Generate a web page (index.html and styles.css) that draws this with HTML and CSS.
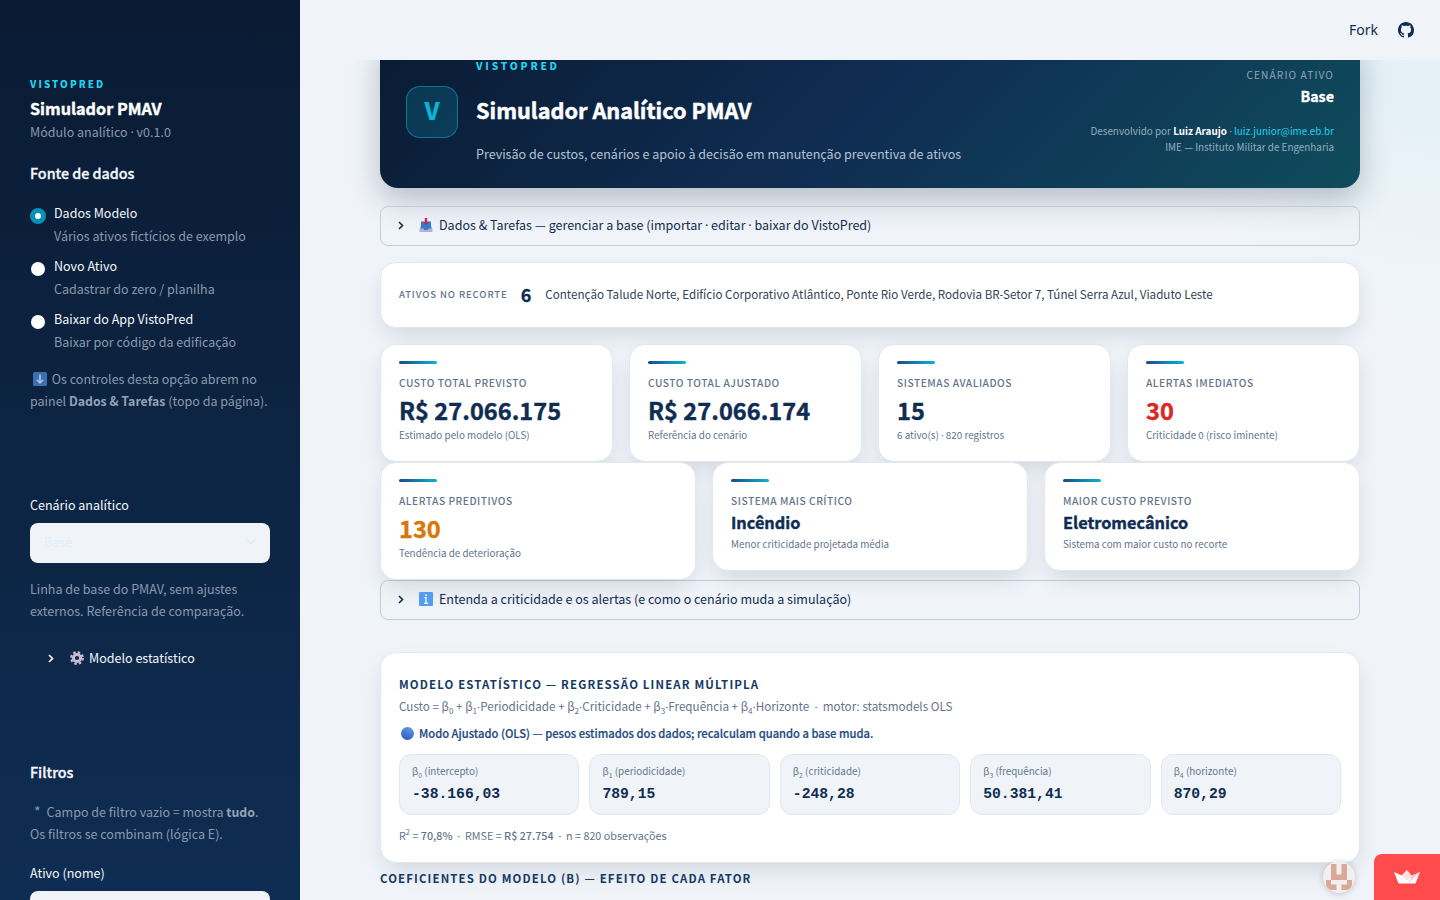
FILE: index.html
```html
<!DOCTYPE html>
<html lang="pt-br">
<head>
    <meta charset="UTF-8">
    <meta name="viewport" content="width=device-width, initial-scale=1.0">
    <title>Simulador Analítico PMAV</title>
    <link rel="stylesheet" href="styles.css">
</head>
<body>
    <div class="app">
        <aside class="sidebar">
            <div class="side-brand">VISTOPRED</div>
            <div class="side-title">Simulador PMAV</div>
            <div class="side-caption">Módulo analítico <i>·</i> v0.1.0</div>

            <h3 class="side-heading">Fonte de dados</h3>
            <div class="radio-group">
                <div class="radio">
                    <span class="dot dot-on"></span>
                    <div><div class="radio-label">Dados Modelo</div><div class="side-caption">Vários ativos fictícios de exemplo</div></div>
                </div>
                <div class="radio">
                    <span class="dot"></span>
                    <div><div class="radio-label">Novo Ativo</div><div class="side-caption">Cadastrar do zero / planilha</div></div>
                </div>
                <div class="radio">
                    <span class="dot"></span>
                    <div><div class="radio-label">Baixar do App VistoPred</div><div class="side-caption">Baixar por código da edificação</div></div>
                </div>
            </div>
            <p class="side-caption side-hint">
                <svg class="icon-down" viewBox="0 0 14 14"><rect width="14" height="14" rx="1.5" fill="#3a70b4"/><path d="M7 2.5v8M4 7.8l3 3 3-3" fill="none" stroke="#a9bdd6" stroke-width="1.8"/></svg>
                Os controles desta opção abrem no<br>painel <b>Dados &amp; Tarefas</b> (topo da página).
            </p>

            <div class="side-label">Cenário analítico</div>
            <div class="select">
                <span>Base</span>
                <svg width="10" height="6" viewBox="0 0 10 6"><path d="M1 1l4 4 4-4" fill="none" stroke="#e3ecf6" stroke-width="1.5"/></svg>
            </div>
            <p class="side-caption side-note">Linha de base do PMAV, sem ajustes<br>externos. Referência de comparação.</p>

            <div class="side-expander">
                <svg class="chevron" viewBox="0 0 6 9"><path d="M1 1l3.5 3.5L1 8" fill="none" stroke="#ffffff" stroke-width="1.7"/></svg>
                <svg class="icon-gear" viewBox="0 0 14 14"><circle cx="7" cy="7" r="5.8" fill="none" stroke="#cbbfd6" stroke-width="2.2" stroke-dasharray="2.5 2.055"/><circle cx="7" cy="7" r="3.6" fill="none" stroke="#c6b9d3" stroke-width="3"/></svg>
                <span>Modelo estatístico</span>
            </div>

            <h3 class="side-heading side-filters">Filtros</h3>
            <p class="side-caption side-help"><span class="star">*</span>Campo de filtro vazio = mostra <b>tudo</b>.<br>Os filtros se combinam (lógica E).</p>
            <div class="side-label side-last">Ativo (nome)</div>
            <div class="select"></div>
        </aside>

        <div class="page">
            <header class="topbar">
                <span class="fork">Fork</span>
                <svg width="16" height="16" viewBox="0 0 16 16"><path fill="#0f2d52" d="M8 0C3.58 0 0 3.58 0 8c0 3.54 2.29 6.53 5.47 7.59.4.07.55-.17.55-.38 0-.19-.01-.82-.01-1.49-2.01.37-2.53-.49-2.69-.94-.09-.23-.48-.94-.82-1.13-.28-.15-.68-.52-.01-.53.63-.01 1.08.58 1.23.82.72 1.21 1.87.87 2.33.66.07-.52.28-.87.51-1.07-1.78-.2-3.64-.89-3.64-3.95 0-.87.31-1.59.82-2.15-.08-.2-.36-1.02.08-2.12 0 0 .67-.21 2.2.82.64-.18 1.32-.27 2-.27s1.36.09 2 .27c1.53-1.04 2.2-.82 2.2-.82.44 1.1.16 1.92.08 2.12.51.56.82 1.27.82 2.15 0 3.07-1.87 3.75-3.65 3.95.29.25.54.73.54 1.48 0 1.07-.01 1.93-.01 2.2 0 .21.15.46.55.38A8.01 8.01 0 0 0 16 8c0-4.42-3.58-8-8-8z"/></svg>
            </header>

            <main class="main">
                <section class="hero">
                    <div class="hero-logo">V</div>
                    <div class="hero-text">
                        <div class="hero-brand">VISTOPRED</div>
                        <h1>Simulador Analítico PMAV</h1>
                        <p>Previsão de custos, cenários e apoio à decisão em manutenção preventiva de ativos</p>
                    </div>
                    <div class="hero-side">
                        <div class="hero-tag">CENÁRIO ATIVO</div>
                        <div class="hero-scenario">Base</div>
                        <div class="hero-credit">Desenvolvido por <b>Luiz Araujo</b> <i>·</i> <a>luiz.junior@ime.eb.br</a></div>
                        <div class="hero-credit">IME — Instituto Militar de Engenharia</div>
                    </div>
                </section>

                <div class="expander expander-data">
                    <svg class="chevron" viewBox="0 0 6 9"><path d="M1 1l3.5 3.5L1 8" fill="none" stroke="#0f2d52" stroke-width="1.6"/></svg>
                    <svg class="icon" viewBox="0 0 14 14"><path d="M2 7h10l1.500 4V14H.5v-3z" fill="#b9aed0"/><path d="M2 3.500h10v7H9.500L8.500 12h-3L4.500 10.500H2z" fill="#2d7fd0"/><path d="M5.800 0h2.400v4.200h2L7 7.500 3.800 4.200h2z" fill="#d8264f"/></svg>
                    <span>Dados &amp; Tarefas — gerenciar a base (importar <i>·</i> editar <i>·</i> baixar do VistoPred)</span>
                </div>

                <section class="card assets">
                    <span class="assets-label">ATIVOS NO RECORTE</span>
                    <span class="assets-count">6</span>
                    <span class="assets-list">Contenção Talude Norte, Edifício Corporativo Atlântico, Ponte Rio Verde, Rodovia BR-Setor 7, Túnel Serra Azul, Viaduto Leste</span>
                </section>

                <div class="kpi-row">
                    <div class="card kpi">
                        <div class="kpi-label">CUSTO TOTAL PREVISTO</div>
                        <div class="kpi-value">R$ 27.066.175</div>
                        <div class="kpi-sub">Estimado pelo modelo (OLS)</div>
                    </div>
                    <div class="card kpi">
                        <div class="kpi-label">CUSTO TOTAL AJUSTADO</div>
                        <div class="kpi-value">R$ 27.066.174</div>
                        <div class="kpi-sub">Referência do cenário</div>
                    </div>
                    <div class="card kpi">
                        <div class="kpi-label">SISTEMAS AVALIADOS</div>
                        <div class="kpi-value">15</div>
                        <div class="kpi-sub">6 ativo(s) <i>·</i> 820 registros</div>
                    </div>
                    <div class="card kpi">
                        <div class="kpi-label">ALERTAS IMEDIATOS</div>
                        <div class="kpi-value red">30</div>
                        <div class="kpi-sub">Criticidade 0 (risco iminente)</div>
                    </div>
                </div>

                <div class="kpi-row">
                    <div class="card kpi">
                        <div class="kpi-label">ALERTAS PREDITIVOS</div>
                        <div class="kpi-value orange">130</div>
                        <div class="kpi-sub">Tendência de deterioração</div>
                    </div>
                    <div class="card kpi">
                        <div class="kpi-label">SISTEMA MAIS CRÍTICO</div>
                        <div class="kpi-value small">Incêndio</div>
                        <div class="kpi-sub">Menor criticidade projetada média</div>
                    </div>
                    <div class="card kpi">
                        <div class="kpi-label">MAIOR CUSTO PREVISTO</div>
                        <div class="kpi-value small">Eletromecânico</div>
                        <div class="kpi-sub">Sistema com maior custo no recorte</div>
                    </div>
                </div>

                <div class="expander">
                    <svg class="chevron" viewBox="0 0 6 9"><path d="M1 1l3.5 3.5L1 8" fill="none" stroke="#0f2d52" stroke-width="1.6"/></svg>
                    <svg class="icon" viewBox="0 0 14 14"><rect width="14" height="14" rx="1" fill="#549cf0"/><path d="M7 2.200v2M5.500 5.700H7v5M5 11.200h4.200" fill="none" stroke="#e4f0fd" stroke-width="1.500"/></svg>
                    <span>Entenda a criticidade e os alertas (e como o cenário muda a simulação)</span>
                </div>

                <section class="card model">
                    <h2 class="section-title">MODELO ESTATÍSTICO — REGRESSÃO LINEAR MÚLTIPLA</h2>
                    <div class="formula">Custo = β<sub>0</sub> + β<sub>1</sub><i>·</i>Periodicidade + β<sub>2</sub><i>·</i>Criticidade + β<sub>3</sub><i>·</i>Frequência + β<sub>4</sub><i>·</i>Horizonte &nbsp;<i>·</i>&nbsp; motor: statsmodels OLS</div>
                    <div class="mode"><span class="mode-dot"></span>Modo Ajustado (OLS) — pesos estimados dos dados; recalculam quando a base muda.</div>
                    <div class="coefs">
                        <div class="coef"><div class="coef-name">β<sub>0</sub> (intercepto)</div><div class="coef-value">-38.166,03</div></div>
                        <div class="coef"><div class="coef-name">β<sub>1</sub> (periodicidade)</div><div class="coef-value">789,15</div></div>
                        <div class="coef"><div class="coef-name">β<sub>2</sub> (criticidade)</div><div class="coef-value">-248,28</div></div>
                        <div class="coef"><div class="coef-name">β<sub>3</sub> (frequência)</div><div class="coef-value">50.381,41</div></div>
                        <div class="coef"><div class="coef-name">β<sub>4</sub> (horizonte)</div><div class="coef-value">870,29</div></div>
                    </div>
                    <div class="stats">R<sup>2</sup> = <b>70,8%</b> &nbsp;<i>·</i>&nbsp; RMSE = <b>R$ 27.754</b> &nbsp;<i>·</i>&nbsp; n = 820 observações</div>
                </section>

                <h2 class="section-title">COEFICIENTES DO MODELO (B) — EFEITO DE CADA FATOR</h2>
            </main>
        </div>
    </div>

    <!-- Selos flutuantes -->
    <div class="avatar">
        <svg width="32" height="32" viewBox="0 0 32 32"><path d="M8 3h5.500v10.500h5V3H24v16H8zM3 19h5v4.500h5.500V29H8q-5-2-5-6zM29 19h-5v4.500h-5.500V29H24q5-2 5-6z" fill="#dba796"/></svg>
    </div>
    <div class="badge">
        <svg width="28" height="16" viewBox="0 0 28 16"><path d="M1 3l8 3.500 5 4 5-4L27 3l-4.500 11.500h-17z" fill="#ffffff"/><path d="M14 1l5.500 6.500L14 11 8.500 6.500z" fill="#ffe0e1"/><path d="M27 3l-8 4-4 7.500z" fill="#ffc4c8"/></svg>
    </div>
</body>
</html>
```
FILE: styles.css
```css
* {
    box-sizing: border-box;
}

body {
    margin: 0;
    height: 900px;
    overflow: hidden;
    font-family: "Noto Sans CJK SC", "Noto Sans", sans-serif;
    font-size: 12.53px;
    line-height: 22px;
    color: #0f2d52;
    background-color: #f0f4f9;
}

h1, h2, h3, p {
    margin: 0;
}

b {
    font-weight: 700;
}

/* ponto separador */
i {
    font-family: "Noto Sans", sans-serif;
    font-style: normal;
    line-height: 0;
}

.app {
    display: flex;
    height: 900px;
}

/* Barra lateral */
.sidebar {
    flex: none;
    width: 300px;
    height: 900px;
    padding: 73px 30px 0;
    overflow: hidden;
    color: #f4f8fd;
    background: linear-gradient(180deg, #0a1b33 0%, #0f2d52 100%);
}

.side-brand {
    font-size: 9.8px;
    font-weight: 900;
    letter-spacing: 2.1px;
    line-height: 22px;
    color: #22d3ee;
}

.side-title {
    font-size: 16.2px;
    font-weight: 700;
    line-height: 26px;
    color: #ffffff;
    -webkit-text-stroke: 0.4px;
}

.side-caption {
    color: #8a99ad;
}

.side-caption b {
    font-size: 12.3px;
    color: #93a4b9;
}

.side-heading {
    margin-top: 18px;
    font-size: 14.3px;
    font-weight: 500;
    line-height: 24px;
    -webkit-text-stroke: 0.3px;
}

.radio-group {
    display: flex;
    flex-direction: column;
    gap: 8px;
    margin-top: 17px;
}

.radio {
    display: flex;
    gap: 8px;
}

.radio .side-caption {
    line-height: 23px;
}

.dot {
    width: 14px;
    height: 14px;
    margin: 7px 1px 0;
    border-radius: 50%;
    background-color: #ffffff;
}

.dot-on {
    width: 16px;
    height: 16px;
    margin: 6px 0 0;
    border: 5px solid #0891b2;
}

.side-hint {
    margin-top: 15px;
}

.icon-down {
    width: 14px;
    height: 14px;
    margin: 0 2px 0 3px;
    vertical-align: -2px;
}

.side-label {
    margin-top: 82px;
}

.select {
    display: flex;
    align-items: center;
    justify-content: space-between;
    height: 40px;
    margin-top: 7px;
    padding: 0 14px 2px;
    border-radius: 8px;
    color: #e3edf9;
    background-color: #f0f4f9;
}

.side-note {
    margin-top: 15px;
}

.side-expander {
    display: flex;
    align-items: center;
    margin-top: 25px;
    padding-left: 18px;
}

.chevron {
    width: 6px;
    height: 9px;
}

.icon-gear {
    width: 14px;
    height: 14px;
    margin: 0 5px 0 16px;
}

.side-filters {
    margin-top: 91px;
}

.side-help {
    margin-top: 17px;
}

.star {
    margin: 0 6px 0 4px;
    font-size: 14px;
    line-height: 0;
}

.side-last {
    margin-top: 17px;
}

/* Conteúdo */
.page {
    flex: 1;
    background: radial-gradient(circle at 100% 0, rgba(6, 182, 212, 0.07), rgba(6, 182, 212, 0) 320px), #f0f4f9;
}

.topbar {
    position: relative;
    z-index: 2;
    display: flex;
    align-items: center;
    justify-content: flex-end;
    gap: 20px;
    height: 60px;
    padding-right: 26px;
    background-color: #f0f4f9;
}

.fork {
    font-family: "Noto Sans", sans-serif;
    font-size: 14px;
}

.main {
    height: 840px;
    padding: 0 80px;
    overflow: hidden;
}

.hero {
    display: flex;
    align-items: center;
    height: 152px;
    margin-top: -24px;
    padding: 0 26px;
    border-radius: 18px;
    color: #ffffff;
    background: linear-gradient(135deg, #0a1b33 0%, #0f2d52 50%, #0f4c5c 100%);
    box-shadow: 0 12px 30px rgba(10, 27, 51, 0.25);
}

.hero-logo {
    width: 52px;
    height: 52px;
    margin-right: 18px;
    border: 1px solid rgba(6, 182, 212, 0.5);
    border-radius: 14px;
    font-size: 23.5px;
    font-weight: 900;
    line-height: 47px;
    text-align: center;
    color: #06b6d4;
    background-color: rgba(6, 182, 212, 0.18);
}

.hero-text {
    flex: 1;
    padding-bottom: 5px;
}

.hero-brand {
    font-size: 10.2px;
    font-weight: 900;
    letter-spacing: 2.8px;
    color: #22d3ee;
}

h1 {
    margin: 11px 0;
    font-size: 21.7px;
    font-weight: 700;
    line-height: 44px;
    -webkit-text-stroke: 0.5px;
}

.hero-text p {
    color: #b4c4d4;
}

.hero-side {
    padding-bottom: 6px;
    text-align: right;
}

.hero-tag {
    font-size: 10.2px;
    letter-spacing: 1.1px;
    color: #8fa6ba;
}

.hero-scenario {
    margin: -1px 0 16px;
    font-size: 14.3px;
    font-weight: 700;
    -webkit-text-stroke: 0.3px;
}

.hero-credit {
    font-size: 9.88px;
    line-height: 16px;
    color: #93afbe;
}

.hero-credit b {
    color: #ffffff;
}

.hero-credit a {
    color: #22d3ee;
}

.expander {
    display: flex;
    align-items: center;
    height: 40px;
    padding: 0 0 1px 17px;
    border: 1px solid #c3ccd8;
    border-radius: 8px;
}

.expander span {
    padding-bottom: 2px;
}

.expander-data {
    margin: 18px 0 16px;
}

.icon {
    width: 14px;
    height: 14px;
    margin: 0 6px 2px 15px;
}

.card {
    border: 1px solid #e2e8f0;
    border-radius: 16px;
    background-color: #ffffff;
    box-shadow: 0 10px 24px -6px rgba(10, 27, 51, 0.16);
}

.assets {
    display: flex;
    align-items: center;
    height: 66px;
    padding: 0 18px 2px;
    margin-bottom: 16px;
}

.assets-label {
    font-size: 9.5px;
    font-weight: 500;
    letter-spacing: 0.9px;
    color: #64748b;
}

.assets-count {
    margin: 0 14px 0 13px;
    font-size: 18px;
    font-weight: 700;
    -webkit-text-stroke: 0.3px;
}

.assets-list {
    font-size: 11.64px;
    color: #334155;
}

.kpi-row {
    display: flex;
    align-items: flex-start;
    gap: 16px;
}

.kpi {
    flex: 1;
    padding: 16px 18px 18px;
}

.kpi::before {
    content: "";
    display: block;
    width: 38px;
    height: 3px;
    margin-bottom: 9px;
    border-radius: 2px;
    background: linear-gradient(90deg, #1e4b84, #06b6d4);
}

.kpi-label {
    font-size: 10.2px;
    font-weight: 500;
    letter-spacing: 0.53px;
    line-height: 20px;
    color: #64748b;
}

.kpi-value {
    font-size: 23.6px;
    font-weight: 700;
    line-height: 34px;
    -webkit-text-stroke: 0.4px;
}

.kpi-value.small {
    padding-bottom: 2px;
    font-size: 16.3px;
    line-height: 23px;
}

.red {
    color: #dc2626;
}

.orange {
    color: #d97706;
}

.kpi-sub {
    font-size: 9.85px;
    line-height: 16px;
    color: #64748b;
}

.model {
    height: 211px;
    margin-top: 32px;
    padding: 20px 18px 0;
}

.section-title {
    font-size: 11.4px;
    font-weight: 700;
    letter-spacing: 1.15px;
    line-height: 22px;
    color: #143a66;
}

.model + .section-title {
    margin-top: 4px;
}

sub, sup {
    font-size: 70%;
    line-height: 0;
}

.formula {
    font-size: 11.67px;
    color: #64748b;
}

.mode {
    display: flex;
    align-items: center;
    margin-top: 5px;
    font-size: 11.2px;
    font-weight: 500;
    color: #1e4b84;
    -webkit-text-stroke: 0.2px;
}

.mode-dot {
    width: 13px;
    height: 13px;
    margin: 0 5px 0 2px;
    border-radius: 50%;
    background: linear-gradient(200deg, #5aa5ea, #3550b8);
}

.coefs {
    display: flex;
    gap: 10px;
    margin-top: 10px;
}

.coef {
    flex: 1;
    height: 61px;
    padding: 6px 12px;
    border: 1px solid #e2e8f0;
    border-radius: 12px;
    background-color: #f0f4f9;
}

.coef-name {
    font-size: 9.9px;
    line-height: 20px;
    color: #64748b;
}

.coef-value {
    font-family: "Liberation Mono", monospace;
    font-size: 14.7px;
    font-weight: 700;
    line-height: 26px;
}

.stats {
    margin-top: 10px;
    font-size: 10.75px;
    color: #64748b;
}

.stats b {
    font-weight: 500;
}

/* Selos flutuantes */
.avatar {
    position: absolute;
    left: 1323px;
    top: 861px;
    z-index: 3;
    width: 32px;
    height: 32px;
    border-radius: 50%;
    overflow: hidden;
    background-color: #f0f0f0;
    box-shadow: 0 1px 6px rgba(0, 0, 0, 0.2);
}

.badge {
    position: absolute;
    left: 1374px;
    top: 854px;
    z-index: 3;
    display: flex;
    align-items: center;
    justify-content: center;
    width: 66px;
    height: 46px;
    border-top-left-radius: 8px;
    background-color: #ff4b4b;
}
```
